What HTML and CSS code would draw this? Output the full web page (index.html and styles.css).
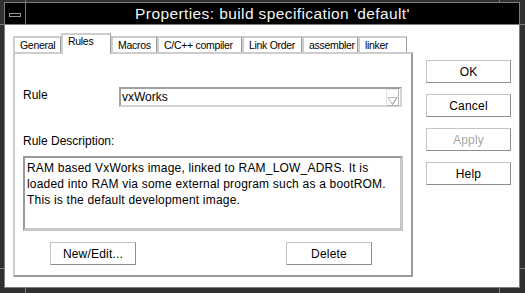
FILE: index.html
```html
<!DOCTYPE html>
<html>
  <head>
    <title>Properties: build specification 'default'</title>
    <meta charset="UTF-8" />
    <link rel="stylesheet" href="styles.css">
  </head>
  <body>
    <div class="window">
      <div class="frame">
        <div class="titlebar">
          <div class="menu-btn"><span class="menu-bar"></span></div>
          <div class="title">Properties: build specification 'default'</div>
        </div>

        <div class="content">
          <div class="left">
            <div class="tabs">
              <div class="tab">General</div>
              <div class="tab active">Rules</div>
              <div class="tab">Macros</div>
              <div class="tab">C/C++ compiler</div>
              <div class="tab">Link Order</div>
              <div class="tab">assembler</div>
              <div class="tab">linker</div>
            </div>

            <div class="panel">
              <div class="rule-row">
                <label class="rule-label">Rule</label>
                <div class="combo">
                  <span class="combo-value">vxWorks</span>
                  <span class="combo-arrow">
                    <svg width="13" height="17" viewBox="0 0 13 17">
                      <path d="M0.5 16.5 V0.5 H12.5" fill="none" stroke="#e4e4e4" />
                      <path d="M12.5 0.5 V16.5 H0.5" fill="none" stroke="#b4b4b4" />
                      <path d="M2 8.5 H11 L6.5 15.5 Z" fill="none" stroke="#b8b8b8" />
                      <path d="M11 8.5 L6.5 15.5" fill="none" stroke="#9a9a9a" />
                    </svg>
                  </span>
                </div>
              </div>

              <div class="desc-label">Rule Description:</div>
              <div class="desc">RAM based VxWorks image, linked to RAM_LOW_ADRS. It is<br>loaded into RAM via some external program such as a bootROM.<br>This is the default development image.</div>

              <div class="panel-buttons">
                <button class="btn">New/Edit...</button>
                <button class="btn">Delete</button>
              </div>
            </div>
          </div>

          <div class="side">
            <button class="btn">OK</button>
            <button class="btn">Cancel</button>
            <button class="btn disabled">Apply</button>
            <button class="btn">Help</button>
          </div>
        </div>
      </div>

      <!-- resize corner marks on the frame -->
      <span class="tick tick-v tl"></span>
      <span class="tick tick-v tr"></span>
      <span class="tick tick-v bl"></span>
      <span class="tick tick-v br"></span>
      <span class="tick tick-h lt"></span>
      <span class="tick tick-h lb"></span>
      <span class="tick tick-h rt"></span>
      <span class="tick tick-h rb"></span>
    </div>
  </body>
</html>
```

FILE: styles.css
```css
body {
  margin: 0;
  background: #303030;
  font-family: "Liberation Sans", Arial, sans-serif;
  font-size: 12px;
  color: #000;
}
.window {
  position: relative;
  box-sizing: border-box;
  width: 525px;
  height: 293px;
  padding: 2px 5px 5px 4px;
  background: #303030;
}
.frame {
  box-sizing: border-box;
  height: 100%;
  border: 1px solid #7c7c7c;
  background: #fff;
  display: flex;
  flex-direction: column;
}
.titlebar {
  display: flex;
  height: 21px;
  background: #000;
  border-bottom: 1px solid #7c7c7c;
}
.menu-btn {
  width: 20px;
  border-right: 1px solid #7c7c7c;
  display: flex;
  align-items: center;
  justify-content: center;
}
.menu-bar {
  box-sizing: border-box;
  width: 12px;
  height: 4px;
  border: 1px solid #9a9a9a;
  margin-top: 2px;
}
.title {
  flex: 1;
  color: #f4f4f4;
  font-size: 15.5px;
  line-height: 21px;
  text-align: center;
  letter-spacing: 0.4px;
}
.content {
  display: flex;
  padding: 8px 0 0 8px;
}
.left {
  width: 400px;
}
.tabs {
  display: flex;
  align-items: flex-end;
  height: 19px;
  font-size: 10.5px;
  letter-spacing: -0.3px;
}
.tab {
  box-sizing: border-box;
  height: 16px;
  padding: 1px 0 0 5px;
  border-top: 2px solid #cdcdcd;
  border-left: 2px solid #cdcdcd;
  border-right: 1px solid #9c9c9c;
  line-height: 12px;
}
.tab:nth-child(1) { width: 48px; }
.tab:nth-child(2) { width: 50px; }
.tab:nth-child(3) { width: 46px; }
.tab:nth-child(4) { width: 85px; }
.tab:nth-child(5) { width: 60px; }
.tab:nth-child(6) { width: 56px; }
.tab:nth-child(7) { width: 49px; }
.tab.active {
  position: relative;
  z-index: 1;
  height: 21px;
  margin-bottom: -2px;
  padding-top: 0;
  background: #fff;
}
.panel {
  box-sizing: border-box;
  height: 225px;
  padding: 33px 0 0 8px;
  border: 2px solid;
  border-color: #cdcdcd #9c9c9c #9c9c9c #cdcdcd;
}
.rule-row {
  display: flex;
  align-items: center;
  height: 20px;
}
.rule-label {
  width: 96px;
  margin-top: -4px;
}
.combo {
  box-sizing: border-box;
  width: 283px;
  height: 20px;
  display: flex;
  align-items: center;
  border: 2px solid;
  border-color: #a0a0a0 #d4d4d4 #d4d4d4 #a0a0a0;
}
.combo-value {
  flex: 1;
  padding-left: 1px;
}
.combo-arrow {
  display: flex;
  margin-right: 1px;
}
.desc-label {
  margin-top: 27px;
  line-height: 14px;
}
.desc {
  box-sizing: border-box;
  width: 380px;
  height: 75px;
  margin-top: 8px;
  padding: 2px 0 0 2px;
  border: 2px solid;
  border-width: 2px 3px 3px 2px;
  border-color: #9a9a9a #c8c8c8 #c8c8c8 #9a9a9a;
  line-height: 16px;
  letter-spacing: 0.2px;
  white-space: nowrap;
}
.panel-buttons {
  display: flex;
  gap: 150px;
  margin: 11px 0 0 27px;
}
.btn {
  box-sizing: border-box;
  width: 86px;
  height: 23px;
  padding: 0;
  background: #fff;
  border: 1px solid;
  border-color: #c4c4c4 #8e8e8e #8e8e8e #c4c4c4;
  font-family: "Liberation Sans", Arial, sans-serif;
  font-size: 12px;
  letter-spacing: 0.2px;
  color: #000;
}
.side {
  display: flex;
  flex-direction: column;
  gap: 11px;
  margin-left: 13px;
  padding-top: 27px;
}
.side .btn {
  width: 85px;
}
.btn.disabled {
  color: #a8a8a8;
}
.tick {
  position: absolute;
  background: #7c7c7c;
}
.tick-v {
  width: 1px;
  height: 3px;
}
.tick-h {
  width: 4px;
  height: 1px;
}
.tl { left: 25px; top: 0; }
.tr { left: 499px; top: 0; }
.bl { left: 25px; bottom: 0; height: 5px; }
.br { left: 499px; bottom: 0; height: 5px; }
.lt { left: 0; top: 24px; }
.lb { left: 0; top: 268px; }
.rt { right: 0; top: 24px; width: 5px; }
.rb { right: 0; top: 268px; width: 5px; }
```
